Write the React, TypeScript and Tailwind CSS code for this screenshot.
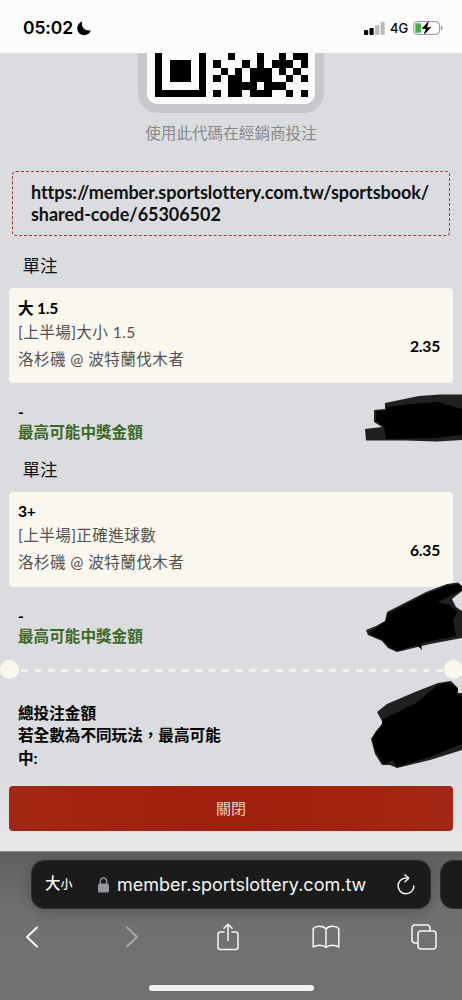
import React, { FC } from "react";

type Bet = {
  pick: string;
  market: string;
  match: string;
  odds: string;
};

const bets: Bet[] = [
  {
    pick: "大 1.5",
    market: "[上半場]大小 1.5",
    match: "洛杉磯 @ 波特蘭伐木者",
    odds: "2.35",
  },
  {
    pick: "3+",
    market: "[上半場]正確進球數",
    match: "洛杉磯 @ 波特蘭伐木者",
    odds: "6.35",
  },
];

// visible rows of the QR code, "#" is a dark module
const qrRows = [
  "#.....#...#...#..#.##",
  "#.###.#.#...#.#.###.#",
  "#.###.#..#.#.###.#.#.",
  "#.###.#.#.##.###..#.#",
  "#.....#...####.###...",
  "#######.#.##.###..#.#",
];

const StatusBar: FC = () => (
  <header className="flex h-[53px] items-center justify-between bg-[#fbfbfb] pl-[23px] pr-[19px] pt-[3px] font-['Inter',sans-serif]">
    <div className="flex items-center gap-[4px]">
      <span className="text-[17.500px] font-semibold leading-6 tracking-[-0.100px] text-black">
        05:02
      </span>
      <svg width="15" height="15" viewBox="0 0 15 15" fill="#000">
        <path d="M5.200.6C3.900 5.800 7.500 10.600 14 9.300C12.600 12.600 10 14.200 7.200 14.200C3.300 14.200.3 11.200.3 7.300C.3 4.300 2.200 1.700 5.200.6Z" />
      </svg>
    </div>
    <div className="flex items-center">
      <svg width="21" height="13" viewBox="0 0 21 13">
        <rect x="0" y="8" width="4.200" height="5" rx="1" fill="#000" />
        <rect x="5.500" y="6" width="4.200" height="7" rx="1" fill="#000" />
        <rect x="11" y="3" width="4.200" height="10" rx="1" fill="#bcbcbd" />
        <rect x="16.500" y="0" width="4.200" height="13" rx="1" fill="#bcbcbd" />
      </svg>
      <span className="ml-[5px] w-[23px] text-[13px] font-medium leading-4 text-black">
        4G
      </span>
      <svg width="30" height="16" viewBox="0 0 30 16">
        <rect x=".6" y="1.600" width="26" height="12.800" rx="3.800" fill="none" stroke="#919192" />
        <rect x="2.300" y="3.300" width="6" height="9.400" rx="1.500" fill="#47b04b" />
        <path d="M28 5.500C30 6.300 30 9.600 28 10.400Z" fill="#919192" />
        <path
          d="M16.200.6L8.600 8.700H12.800L10.500 15.300L18.300 7.200H14Z"
          fill="#000"
          stroke="#fbfbfb"
          strokeWidth="1.200"
          paintOrder="stroke"
        />
      </svg>
    </div>
  </header>
);

const QrCode: FC = () => (
  <div className="mx-auto h-[60px] w-[186px] rounded-b-[20px] bg-[#c7c7ce] px-[9px] pb-[9px]">
    <div className="h-full rounded-b-[10px] bg-[#fcfcfc] px-2">
      <svg
        width="153"
        height="44"
        viewBox="0 0 21 6"
        preserveAspectRatio="none"
        shapeRendering="crispEdges"
      >
        {qrRows.map((row, y) =>
          row
            .split("")
            .map((cell, x) =>
              cell === "#" ? (
                <rect key={`${x}-${y}`} x={x} y={y} width="1" height="1" />
              ) : null
            )
        )}
      </svg>
    </div>
  </div>
);

const BetItem: FC<{ bet: Bet }> = ({ bet }) => (
  <section className="h-[203.600px]">
    <h2 className="pl-[22.500px] text-[17.500px] leading-[26px] text-[#111]">單注</h2>
    <div className="mx-[9px] mt-[9px] flex h-[95px] justify-between rounded-[4px] bg-[#faf7ee] pl-[9px] pr-[13px]">
      <div className="pt-[8.500px] text-[#525250]">
        <p className="text-[15.600px] font-bold leading-[22px] tracking-[-0.200px] text-black">
          {bet.pick}
        </p>
        <p className="text-[15.600px] leading-[27px] tracking-[0.400px]">
          {bet.market}
        </p>
        <p className="text-[15.600px] leading-[27px] tracking-[0.400px]">
          {bet.match}
        </p>
      </div>
      <span className="pt-[46px] text-[15.600px] font-bold leading-[24px] tracking-[-0.200px] text-black">
        {bet.odds}
      </span>
    </div>
    <div className="ml-[18px] mt-[19px] text-[15.600px] font-bold">
      <p className="leading-[20px] text-black">-</p>
      <p className="leading-[20px] text-[#3b6826]">最高可能中獎金額</p>
    </div>
  </section>
);

// marker strokes that hide the amounts
const Scribbles: FC = () => (
  <svg
    className="pointer-events-none absolute left-0 top-0"
    width="462"
    height="852"
    viewBox="0 0 462 852"
  >
    <g fill="#202022">
      <path d="M385 403L419 396L440 394.500H462V440L437 441.500L405 440.500L366 440.500L365 429L382 427L374 422V410L385 409Z" />
      <path d="M387 612L426 592L447 584L458 582.500L462 586V591L452 599L456 607L462 611V638L430 644L397 652L388 648L382 641L368 635L366 630L376 626L385 621Z" />
      <path d="M377 712L387 704L415 692L438 683L451 681L458 688V693L462 693V750L430 760L397 768L390 765L382 765L375 754L371 739L376 731L383 723Z" />
    </g>
    <g fill="#000">
      <path d="M386 407L410 404L438 402L458 408L462 409V435L435 438L386 439L384 427L376 421V411L386 411Z" />
      <path d="M388 614L426 594L447 586L459 584L462 587V590L438 602L450 605L458 612L453 619L456 636L421 643L422 650L417 645L397 651L389 647L383 640L369 634L376 628L386 621Z" />
      <path d="M382 720L416 703L438 685L448 682L457 688L457 694L462 696V744L430 757L397 767L393 760L384 764L376 752L372 739L382 724Z" />
    </g>
  </svg>
);

const TicketSummary: FC = () => (
  <>
    <div className="flex h-[19px] items-center">
      <span className="-ml-[0.500px] h-[19px] w-[19px] rounded-full bg-[#faf7ec]" />
      <svg className="ml-[2px] flex-1" height="4" width="423">
        <line
          x1="0"
          y1="2.500"
          x2="422"
          y2="2.500"
          stroke="#f8f6ee"
          strokeWidth="2.500"
          strokeDasharray="7 6.400"
        />
      </svg>
      <span className="-mr-[0.500px] h-[19px] w-[19px] rounded-full bg-[#faf7ec]" />
    </div>
    <div className="ml-[18px] mt-[23px] w-[210px] text-[15.600px] font-bold leading-[22.300px] text-black">
      <p>總投注金額</p>
      <p>若全數為不同玩法，最高可能中:</p>
    </div>
  </>
);

const BrowserBar: FC = () => (
  <footer className="h-[149px] overflow-hidden border-t border-[#8a8a8a] bg-linear-to-b from-[#606060] via-[#70706f] via-40% to-[#727270] pt-[8px] font-['Inter','Noto_Sans_CJK_TC',sans-serif]">
    <div className="ml-[31px] flex w-[460px] gap-[9px]">
      <div className="flex h-[49px] w-[400px] shrink-0 items-center rounded-[13px] border border-[#313131] bg-[#1b1b1b] text-[#f4f4f4] shadow-[0_3px_14px_rgba(0,0,0,0.220)]">
        <span className="ml-[13px] flex w-[53px] items-baseline font-medium leading-6">
          <span className="text-[15.500px]">大</span>
          <span className="text-[12px]">小</span>
        </span>
        <svg width="11" height="16" viewBox="0 0 11 16">
          <rect x="0" y="6.500" width="11" height="9" rx="1.500" fill="#96949c" />
          <path d="M2.300 7V4.200C2.300-.1 8.700-.1 8.700 4.200V7" fill="none" stroke="#96949c" strokeWidth="1.300" />
        </svg>
        <span className="ml-[8px] w-[280px] whitespace-nowrap text-[18px] leading-6">
          member.sportslottery.com.tw
        </span>
        <svg
          width="18"
          height="21"
          viewBox="0 0 18 21"
          fill="none"
          stroke="#f4f4f4"
          strokeWidth="1.500"
          strokeLinecap="round"
          strokeLinejoin="round"
        >
          <path d="M11 4H9A7.900 7.900 0 1 0 16.900 12" />
          <path d="M8 .8L11.700 4.200L8 7.800" />
        </svg>
      </div>
      <div className="h-[49px] w-[60px] shrink-0 rounded-[13px] border border-[#313131] bg-[#1b1b1b]" />
    </div>
    <nav className="-ml-[17px] grid h-[56px] w-[490px] grid-cols-5 place-items-center text-[#f7f7f7]">
      <svg width="14" height="22" viewBox="0 0 14 22" fill="none" stroke="currentColor" strokeWidth="2" strokeLinecap="round" strokeLinejoin="round">
        <path d="M12 1.500L2 11L12 20.500" />
      </svg>
      <svg className="ml-[4px]" width="14" height="22" viewBox="0 0 14 22" fill="none" stroke="#ababaa" strokeWidth="1.800" strokeLinecap="round" strokeLinejoin="round">
        <path d="M2 1.500L12 11L2 20.500" />
      </svg>
      <svg width="22" height="28" viewBox="0 0 22 28" fill="none" stroke="currentColor" strokeWidth="1.500" strokeLinecap="round" strokeLinejoin="round">
        <path d="M7 9H3.500Q1 9 1 11.500V24Q1 26.500 3.500 26.500H18.500Q21 26.500 21 24V11.500Q21 9 18.500 9H15" />
        <path d="M11 17.500V1.500M7 5.200L11 1.200L15 5.200" />
      </svg>
      <svg width="28" height="24" viewBox="0 0 28 24" fill="none" stroke="currentColor" strokeWidth="1.500" strokeLinecap="round" strokeLinejoin="round">
        <path d="M14 4C11 .3 4.500.3 1.200 3.500V22C5 19.500 11 19.500 14 22.500C17 19.500 23 19.500 26.800 22V3.500C23.500.3 17 .3 14 4ZM14 4V22.500" />
      </svg>
      <svg width="26" height="26" viewBox="0 0 26 26" fill="none" stroke="currentColor" strokeWidth="1.500" strokeLinejoin="round">
        <rect x="7" y="7" width="18" height="18" rx="3" />
        <path d="M7 19H4.200Q1 19 1 16V4Q1 1 4 1H16Q19 1 19 4V7" />
      </svg>
    </nav>
    <div className="mx-auto mt-[20px] h-[6px] w-[165px] rounded-full bg-[#f1f1f1]" />
  </footer>
);

const App: FC = () => (
  <div
    lang="zh-Hant"
    className="relative h-[1000px] w-[462px] overflow-hidden bg-[#dbdcdf] font-['Lato','Noto_Sans_CJK_TC',sans-serif] [font-variant-ligatures:none]"
  >
    <StatusBar />
    <main className="h-[798px] bg-linear-to-b from-[#dbdcdf] from-90% to-[#e7e7e9]">
      <QrCode />
      <p className="mt-[8px] text-center text-[15.600px] leading-6 text-[#88888a]">
        使用此代碼在經銷商投注
      </p>
      {/* share link */}
      <div className="mx-[12px] mt-[25.500px] flex h-[65.500px] items-center rounded-[4px] border border-dashed border-[#a52f35] pl-[18px] text-[18px] font-bold leading-[22.300px] tracking-[-0.050px] text-[#111]">
        <p>
          https://member.sportslottery.com.tw/sportsbook/
          <br />
          shared-code/65306502
        </p>
      </div>
      <div className="mt-[17px]">
        {bets.map((bet) => (
          <BetItem key={bet.pick} bet={bet} />
        ))}
      </div>
      <TicketSummary />
      <button className="mx-[9px] mt-[17px] block h-[45px] w-[444px] rounded-[4px] bg-linear-to-r from-[#a42614] via-[#9f200b] to-[#a42614] text-[15px] text-[#efcfca]">
        關閉
      </button>
    </main>
    <BrowserBar />
    <Scribbles />
  </div>
);

export default App;
